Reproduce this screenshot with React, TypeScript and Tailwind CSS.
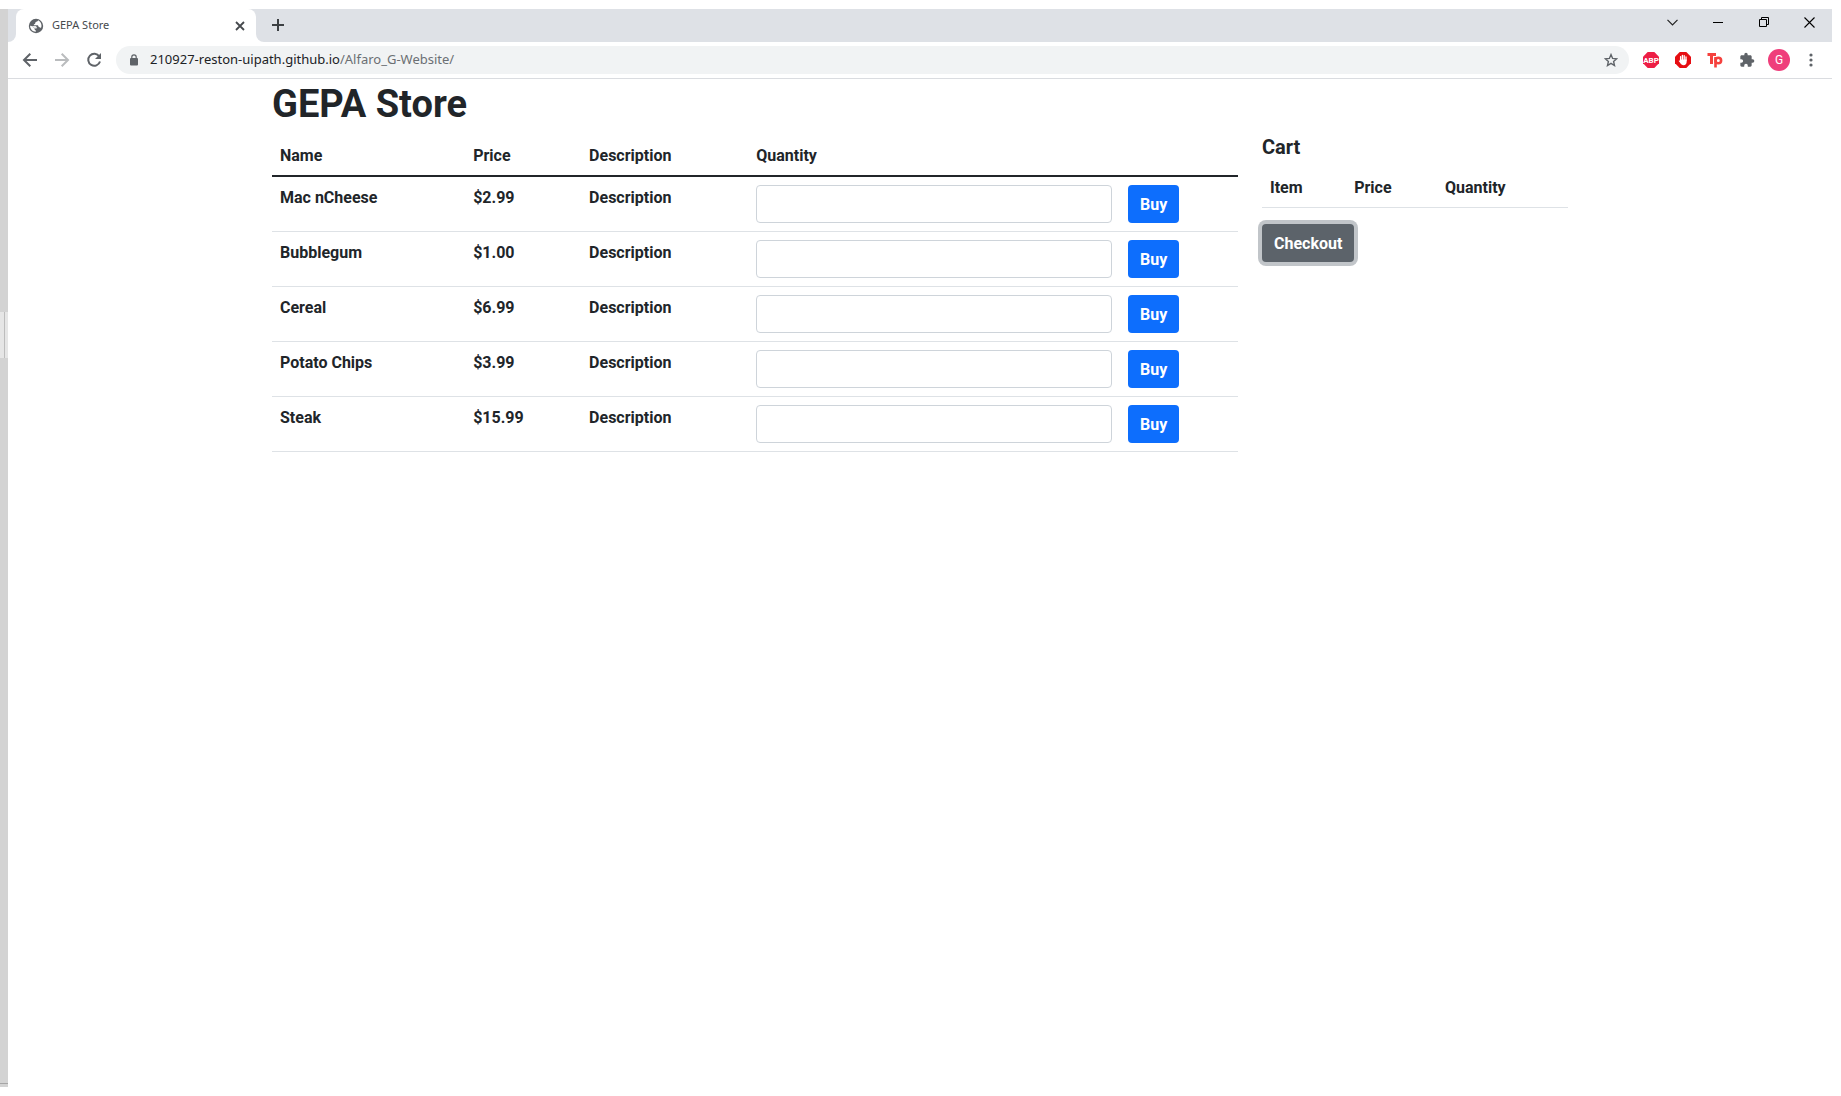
import type { ReactNode } from "react";

const products = [
  { name: "Mac nCheese", price: "$2.99", description: "Description" },
  { name: "Bubblegum", price: "$1.00", description: "Description" },
  { name: "Cereal", price: "$6.99", description: "Description" },
  { name: "Potato Chips", price: "$3.99", description: "Description" },
  { name: "Steak", price: "$15.99", description: "Description" },
];

function IconButton({ label, className, children }: { label: string; className?: string; children: ReactNode }) {
  return (
    <button type="button" aria-label={label} className={`flex h-7 shrink-0 items-center justify-center ${className ?? "w-8"}`}>
      {children}
    </button>
  );
}

function GlobeIcon() {
  return (
    <svg width="16" height="16" viewBox="0 0 16 16">
      <circle cx="8" cy="8" r="7.2" fill="#5f6368" />
      <path
        d="M10.200 2.300C9.800 3.600 8.400 3.700 7.600 4.300c-.7.600-.1 1.400-.9 1.800-.6.300-1 .4-.9 1.100h3.400c.9 0 1.300.6 1.400 1.500.1.600.8.500 1.300.6.300.1.600.4.900.9.500-.8.700-1.500.7-2.400 0-2.500-1.300-4.500-3.300-5.500z"
        fill="#fff"
      />
      <path d="M2.100 7.800c0 3.200 2.500 5.900 5.700 6v-1.500c-.9-.1-1.200-.6-1.200-1.300v-.6L3.500 8z" fill="#fff" />
      <path d="M3.500 8l3.100 2.400h1.600c.8 0 .9-.9.500-1.500L7.800 8z" fill="#fff" opacity=".85" />
    </svg>
  );
}

function TabStrip() {
  return (
    <div className="flex h-[33px] bg-[#dee1e6] pl-2">
      <div className="relative flex w-60 items-center rounded-t-lg bg-white pr-2 pl-3">
        <span className="absolute bottom-0 -left-2 size-2 bg-white" />
        <span className="absolute bottom-0 -left-2 size-2 rounded-br-lg bg-[#dee1e6]" />
        <span className="absolute -right-2 bottom-0 size-2 bg-white" />
        <span className="absolute -right-2 bottom-0 size-2 rounded-bl-lg bg-[#dee1e6]" />
        <GlobeIcon />
        <span className="ml-2 flex-1 font-['Noto_Sans',sans-serif] text-[11px] text-[#45494d]">GEPA Store</span>
        <button type="button" aria-label="Close tab" className="flex size-4 items-center justify-center">
          <svg width="10" height="10" viewBox="0 0 10 10" stroke="#45494d" strokeWidth="1.8">
            <path d="M1 1l8 8M9 1l-8 8" />
          </svg>
        </button>
      </div>
      <IconButton label="New tab" className="mt-0.5 ml-2 w-7">
        <svg width="12" height="12" viewBox="0 0 12 12" stroke="#3c4043" strokeWidth="2">
          <path d="M6 0v12M0 6h12" />
        </svg>
      </IconButton>
      <div className="flex-1" />
      <div className="flex h-[26px] items-center">
        <IconButton label="Search tabs" className="w-[46px]">
          <svg width="11" height="7" viewBox="0 0 11 7" fill="none" stroke="#222" strokeWidth="1.2">
            <path d="M.5.8l5 5 5-5" />
          </svg>
        </IconButton>
        <IconButton label="Minimize" className="w-[46px]">
          <svg width="10" height="10" viewBox="0 0 10 10" fill="#000">
            <path d="M0 5h10v1H0z" />
          </svg>
        </IconButton>
        <IconButton label="Restore" className="w-[46px]">
          <svg width="10" height="10" viewBox="0 0 10 10" fill="none" stroke="#000">
            <path d="M.5 2.5h7v7h-7zM2.5 2.500v-2h7v7h-2" />
          </svg>
        </IconButton>
        <IconButton label="Close" className="w-[45px]">
          <svg width="11" height="11" viewBox="0 0 11 11" stroke="#000" strokeWidth="1.1">
            <path d="M.5.5l10 10M10.500.5l-10 10" />
          </svg>
        </IconButton>
      </div>
    </div>
  );
}

function Toolbar() {
  return (
    <div className="flex h-[37px] items-center border-b border-[#dadce0] bg-white pr-[5px] pl-1.5">
      <IconButton label="Back">
        <svg width="16" height="16" viewBox="0 0 16 16" fill="none" stroke="#5f6368" strokeWidth="2">
          <path d="M15 8H2.500M8.300 1.700L2 8l6.300 6.300" />
        </svg>
      </IconButton>
      <IconButton label="Forward">
        <svg width="16" height="16" viewBox="0 0 16 16" fill="none" stroke="#babcbe" strokeWidth="2">
          <path d="M1 8h12.500M7.700 1.700L14 8l-6.300 6.300" />
        </svg>
      </IconButton>
      <IconButton label="Reload">
        <svg width="16" height="16" viewBox="0 0 16 16">
          <path d="M13.300 4.500A6 6 0 1 0 14 9.500" fill="none" stroke="#5f6368" strokeWidth="2" />
          <path d="M15 1v6H9z" fill="#5f6368" />
        </svg>
      </IconButton>
      <div className="ml-1.5 flex h-7 min-w-0 flex-1 items-center rounded-full bg-[#f1f3f4] pl-3.5">
        <svg width="8" height="12" viewBox="0 0 8 12" className="shrink-0">
          <rect y="4" width="8" height="7.500" rx="1" fill="#5f6368" />
          <path d="M1.800 4.500V3a2.200 2.200 0 0 1 4.400 0v1.500" fill="none" stroke="#5f6368" strokeWidth="1.200" />
        </svg>
        <a href="#" className="ml-3 flex-1 truncate font-['Noto_Sans',sans-serif] text-[13px] text-[#6b6f73]">
          <span className="text-[#202124]">210927-reston-uipath.github.io</span>/Alfaro_G-Website/
        </a>
        <button type="button" aria-label="Bookmark this tab" className="mr-2.5 flex size-4 items-center justify-center">
          <svg width="14" height="14" viewBox="0 0 14 14" fill="none" stroke="#5f6368" strokeWidth="1.400">
            <path d="M7 1.600l1.600 3.800 4.100.4-3.100 2.700.9 4L7 10.400l-3.500 2.100.9-4L1.300 5.800l4.100-.4z" />
          </svg>
        </button>
      </div>
      <div className="ml-1.5 flex items-center">
        <IconButton label="Adblock Plus">
          <svg width="16" height="16" viewBox="0 0 16 16">
            <path d="M4.700 0h6.600L16 4.700v6.600L11.300 16H4.700L0 11.300V4.700z" fill="#ed1e45" />
            <text x="8" y="10.800" textAnchor="middle" fill="#fff" fontSize="8" fontWeight="700" fontFamily="Roboto, sans-serif">
              ABP
            </text>
          </svg>
        </IconButton>
        <IconButton label="AdBlock">
          <svg width="16" height="16" viewBox="0 0 16 16">
            <path d="M4.700 0h6.600L16 4.700v6.600L11.300 16H4.700L0 11.300V4.700z" fill="#e60d12" />
            <path d="M5.600 8.500V4.600M7.400 7.500V3.300M9.200 7.500V3.600M11 8.500V5" stroke="#fff" strokeWidth="1.300" strokeLinecap="round" />
            <path d="M4.950 7.500h6.700v2.300c0 2-1.200 3.500-3 3.500-1.600 0-2.700-.9-3.400-2.200L3.700 8.900c.3-.6.900-.5 1.250-.1z" fill="#fff" />
          </svg>
        </IconButton>
        <IconButton label="TP extension">
          <svg width="16" height="16" viewBox="0 0 16 16" fill="none" stroke="#f5413d" strokeWidth="3">
            <path d="M.5 2.500h8.500M4.500 2v10" />
            <path d="M8.500 5v10.500" strokeWidth="2.600" />
            <circle cx="11.300" cy="8.500" r="2.800" strokeWidth="2.600" />
          </svg>
        </IconButton>
        <IconButton label="Extensions">
          <svg width="16" height="16" viewBox="0 0 24 24" fill="#5f6368">
            <path d="M20.500 11H19V7c0-1.100-.9-2-2-2h-4V3.500a2.500 2.500 0 0 0-5 0V5H4c-1.100 0-2 .9-2 2v3.800h1.500a2.700 2.700 0 0 1 0 5.400H2V20c0 1.100.9 2 2 2h3.800v-1.500a2.700 2.700 0 0 1 5.400 0V22H17c1.100 0 2-.9 2-2v-4h1.500a2.500 2.500 0 0 0 0-5z" />
          </svg>
        </IconButton>
        <IconButton label="Profile">
          <span className="flex size-[22px] items-center justify-center rounded-full bg-[#ef3e7b] font-['Roboto',sans-serif] text-xs text-white">
            G
          </span>
        </IconButton>
        <IconButton label="Menu">
          <svg width="4" height="14" viewBox="0 0 4 14" fill="#5f6368">
            <circle cx="2" cy="2" r="1.600" />
            <circle cx="2" cy="7" r="1.600" />
            <circle cx="2" cy="12" r="1.600" />
          </svg>
        </IconButton>
      </div>
    </div>
  );
}

function TextCell({ heading, children }: { heading?: boolean; children: ReactNode }) {
  const Cell = heading ? "th" : "td";
  return <Cell className="px-2 pt-[9px] pb-[7px]">{children}</Cell>;
}

function ProductTable() {
  return (
    <table className="mt-1.5 w-full table-fixed border-collapse text-left">
      <colgroup>
        <col className="w-[20%]" />
        <col className="w-[12%]" />
        <col className="w-[17.3%]" />
        <col className="w-[38.5%]" />
        <col />
      </colgroup>
      <thead>
        <tr className="border-b-2 border-[#212529]">
          <TextCell heading>Name</TextCell>
          <TextCell heading>Price</TextCell>
          <TextCell heading>Description</TextCell>
          <TextCell heading>Quantity</TextCell>
          <td />
        </tr>
      </thead>
      <tbody>
        {products.map((product) => (
          <tr key={product.name} className="border-b border-[#dee2e6] align-top">
            <TextCell>{product.name}</TextCell>
            <TextCell>{product.price}</TextCell>
            <TextCell>{product.description}</TextCell>
            <td className="p-2">
              <input
                type="text"
                aria-label={`Quantity of ${product.name}`}
                className="block h-[38px] w-full rounded border border-[#ced4da] bg-white px-3"
              />
            </td>
            <td className="p-2">
              <button type="button" className="block h-[38px] rounded bg-[#0d6efd] px-3 pt-px text-white">
                Buy
              </button>
            </td>
          </tr>
        ))}
      </tbody>
    </table>
  );
}

function Cart() {
  return (
    <aside>
      <h2 className="text-xl leading-6">Cart</h2>
      <table className="mt-2 w-full table-fixed border-collapse text-left">
        <colgroup>
          <col className="w-[27.5%]" />
          <col className="w-[29.7%]" />
          <col />
        </colgroup>
        <thead>
          <tr className="border-b border-[#dee2e6]">
            <TextCell heading>Item</TextCell>
            <TextCell heading>Price</TextCell>
            <TextCell heading>Quantity</TextCell>
          </tr>
        </thead>
      </table>
      <button type="button" className="mt-4 h-[38px] rounded bg-[#5c636a] px-3 pt-px text-white ring-4 ring-[#c1c5c9]">
        Checkout
      </button>
    </aside>
  );
}

export default function App() {
  return (
    <div className="flex min-h-screen bg-white py-[9px] pr-[9px]">
      <div className="flex w-2 shrink-0 flex-col bg-[#d3d3d3]">
        <div className="h-[303px]" />
        <div className="flex h-[46px] bg-[#e6e6e6] pl-1">
          <div className="w-px bg-[#bdbdbd]" />
        </div>
        <div className="flex-1" />
        <div className="mb-[3px] h-px bg-[#a6a6a6]" />
      </div>
      <div className="min-w-0 flex-1">
        <header>
          <TabStrip />
          <Toolbar />
        </header>
        <main className="mx-auto grid max-w-[1320px] grid-cols-4 font-['Roboto',sans-serif] text-base font-bold text-[#212529]">
          <section className="col-span-3 px-3">
            <h1 className="text-[38px] leading-[50px]">GEPA Store</h1>
            <ProductTable />
          </section>
          <div className="px-3 pt-14">
            <Cart />
          </div>
        </main>
      </div>
    </div>
  );
}
